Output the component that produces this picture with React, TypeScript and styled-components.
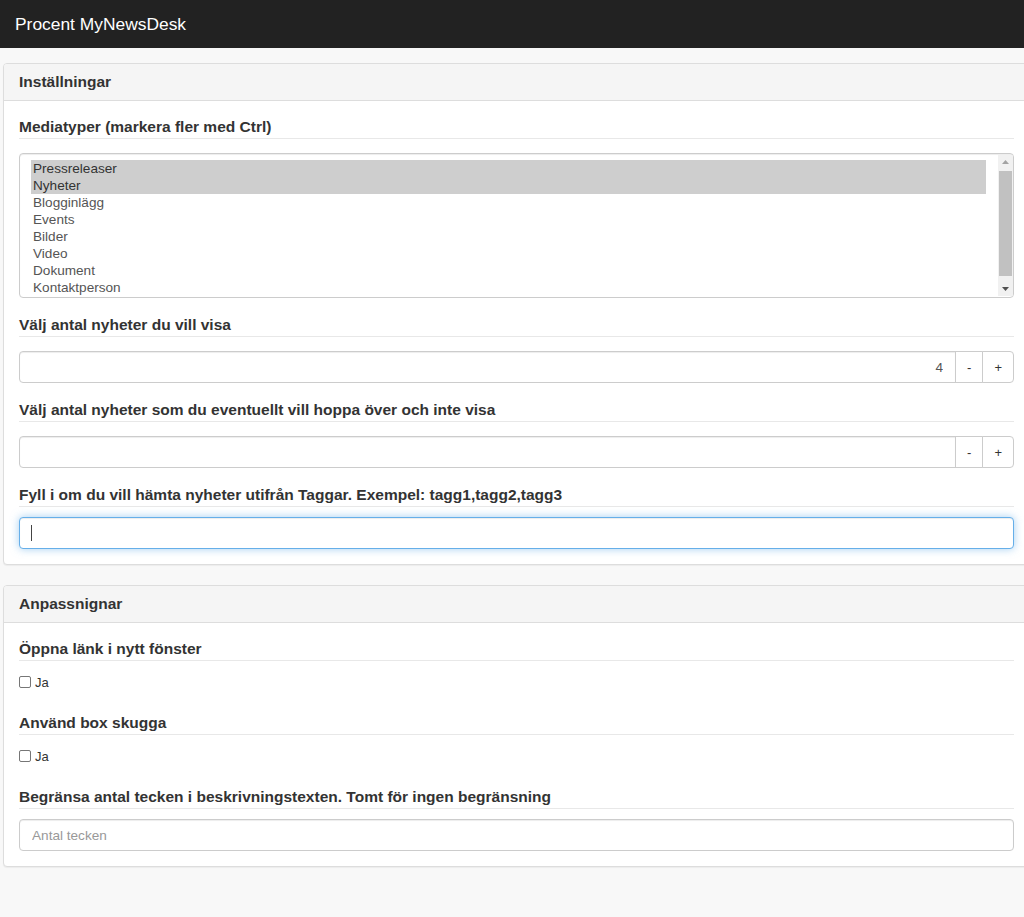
import React from "react";
import styled, { createGlobalStyle } from "styled-components";

const GlobalStyle = createGlobalStyle`
  html,
  body {
    margin: 0;
    padding: 0;
  }

  body {
    background: #f8f8f8;
    font-family: "Liberation Sans", Arial, Helvetica, sans-serif;
    color: #333;
    overflow-x: hidden;
  }

  * {
    box-sizing: border-box;
  }
`;

const Navbar = styled.header`
  height: 48px;
  background: #222;
  display: flex;
  align-items: center;
  padding: 0 15px;
`;

const Brand = styled.a`
  color: #fff;
  font-size: 17.4px;
  text-decoration: none;
`;

// panelen sticker ut lite till höger, som i originalet
const Main = styled.main`
  padding: 15px 0 0 3px;
  margin-right: -6px;
`;

const Panel = styled.section`
  background: #fff;
  border: 1px solid #ddd;
  border-radius: 4px;
  margin-bottom: 20px;
  box-shadow: 0 1px 1px rgba(0, 0, 0, 0.05);
`;

const PanelHeading = styled.h2`
  margin: 0;
  padding: 10px 15px;
  background: #f5f5f5;
  border-bottom: 1px solid #ddd;
  border-radius: 3px 3px 0 0;
  font-size: 15.5px;
  line-height: 16px;
  font-weight: bold;
  color: #333;
`;

const PanelBody = styled.div`
  padding: 15px;
`;

const FormGroup = styled.div<{ $spacing?: number }>`
  margin-bottom: ${({ $spacing }) => $spacing ?? 16}px;

  &:last-child {
    margin-bottom: 0;
  }
`;

const Legend = styled.div<{ $gap?: number }>`
  font-size: 15.5px;
  font-weight: bold;
  line-height: 21px;
  padding-bottom: 1px;
  border-bottom: 1px solid #e8e8e8;
  margin-bottom: ${({ $gap }) => $gap ?? 14}px;
  color: #333;
`;

const ListBox = styled.div`
  height: 145px;
  border: 1px solid #ccc;
  border-radius: 4px;
  display: flex;
  overflow: hidden;
  box-shadow: inset 0 1px 1px rgba(0, 0, 0, 0.075);
`;

const OptionList = styled.ul`
  flex: 1;
  list-style: none;
  margin: 0 12px 0 0;
  padding: 6px 0 0 11px;
`;

const OptionItem = styled.li<{ $selected?: boolean }>`
  font-size: 13.6px;
  line-height: 17px;
  padding: 0 2px;
  color: ${({ $selected }) => ($selected ? "#333" : "#555")};
  background: ${({ $selected }) => ($selected ? "#cecece" : "transparent")};
  white-space: nowrap;
`;

const Scrollbar = styled.div`
  width: 15px;
  margin: 1px 0;
  display: flex;
  flex-direction: column;
  background: #f1f1f1;
`;

const ScrollArrow = styled.div`
  height: 14px;
  display: flex;
  align-items: center;
  justify-content: center;
`;

const ScrollTrack = styled.div`
  flex: 1;
  padding: 2px 1px 6px;
  display: flex;
`;

const ScrollThumb = styled.div`
  flex: 1;
  background: #c1c1c1;
`;

const InputGroup = styled.div`
  display: flex;
  height: 32px;
`;

const NumberInput = styled.input`
  flex: 1;
  min-width: 0;
  height: 100%;
  border: 1px solid #ccc;
  border-radius: 4px 0 0 4px;
  padding: 0 12px;
  text-align: right;
  font-family: inherit;
  font-size: 13.6px;
  color: #555;
  background: #fff;
  box-shadow: inset 0 1px 1px rgba(0, 0, 0, 0.075);
  outline: none;
`;

const StepButton = styled.button`
  height: 100%;
  margin-left: -1px;
  padding: 0 11px;
  border: 1px solid #ccc;
  background: #fff;
  font-family: inherit;
  font-size: 13px;
  color: #333;
  cursor: pointer;

  &:last-child {
    border-radius: 0 4px 4px 0;
  }
`;

const InputWrap = styled.div`
  position: relative;
`;

const TextInput = styled.input<{ $focused?: boolean }>`
  display: block;
  width: 100%;
  height: 32px;
  border: 1px solid ${({ $focused }) => ($focused ? "#66afe9" : "#ccc")};
  border-radius: 4px;
  padding: 0 12px;
  font-family: inherit;
  font-size: 13.6px;
  color: #555;
  background: #fff;
  outline: none;
  box-shadow: ${({ $focused }) =>
    $focused
      ? "inset 0 1px 1px rgba(0,0,0,.075), 0 0 8px rgba(102,175,233,.6)"
      : "inset 0 1px 1px rgba(0,0,0,.075)"};

  &::placeholder {
    color: #999;
  }
`;

const Caret = styled.span`
  position: absolute;
  left: 12px;
  top: 8px;
  width: 1px;
  height: 16px;
  background: #444;
`;

const CheckRow = styled.label`
  display: flex;
  align-items: center;
  gap: 4px;
  height: 14px;
  font-size: 13px;
  color: #333;
  cursor: pointer;
`;

const CheckBox = styled.input`
  appearance: none;
  width: 12px;
  height: 12px;
  margin: 0;
  border: 1px solid #767676;
  border-radius: 2px;
  background: #fff;
`;

const Triangle: React.FC<{ up?: boolean; color: string }> = ({ up, color }) => (
  <svg width="7" height="4" viewBox="0 0 7 4">
    <path d={up ? "M0 4 L3.5 0 L7 4 Z" : "M0 0 L7 0 L3.5 4 Z"} fill={color} />
  </svg>
);

const mediaTypes = [
  "Pressreleaser",
  "Nyheter",
  "Blogginlägg",
  "Events",
  "Bilder",
  "Video",
  "Dokument",
  "Kontaktperson",
];

const selectedTypes = ["Pressreleaser", "Nyheter"];

const App: React.FC = () => {
  return (
    <>
      <GlobalStyle />
      <Navbar>
        <Brand href="#">Procent MyNewsDesk</Brand>
      </Navbar>

      <Main>
        <Panel>
          <PanelHeading>Inställningar</PanelHeading>
          <PanelBody>
            <FormGroup>
              <Legend>Mediatyper (markera fler med Ctrl)</Legend>
              <ListBox role="listbox" aria-multiselectable="true">
                <OptionList>
                  {mediaTypes.map((type) => (
                    <OptionItem
                      key={type}
                      role="option"
                      $selected={selectedTypes.includes(type)}
                    >
                      {type}
                    </OptionItem>
                  ))}
                </OptionList>
                <Scrollbar>
                  <ScrollArrow>
                    <Triangle up color="#a3a3a3" />
                  </ScrollArrow>
                  <ScrollTrack>
                    <ScrollThumb />
                  </ScrollTrack>
                  <ScrollArrow>
                    <Triangle color="#505050" />
                  </ScrollArrow>
                </Scrollbar>
              </ListBox>
            </FormGroup>

            <FormGroup>
              <Legend>Välj antal nyheter du vill visa</Legend>
              <InputGroup>
                <NumberInput type="text" defaultValue="4" />
                <StepButton>-</StepButton>
                <StepButton>+</StepButton>
              </InputGroup>
            </FormGroup>

            <FormGroup>
              <Legend>Välj antal nyheter som du eventuellt vill hoppa över och inte visa</Legend>
              <InputGroup>
                <NumberInput type="text" />
                <StepButton>-</StepButton>
                <StepButton>+</StepButton>
              </InputGroup>
            </FormGroup>

            <FormGroup>
              <Legend $gap={10}>
                Fyll i om du vill hämta nyheter utifrån Taggar. Exempel: tagg1,tagg2,tagg3
              </Legend>
              <InputWrap>
                <TextInput type="text" $focused />
                <Caret />
              </InputWrap>
            </FormGroup>
          </PanelBody>
        </Panel>

        <Panel>
          <PanelHeading>Anpassnignar</PanelHeading>
          <PanelBody>
            <FormGroup $spacing={23}>
              <Legend>Öppna länk i nytt fönster</Legend>
              <CheckRow>
                <CheckBox type="checkbox" />
                Ja
              </CheckRow>
            </FormGroup>

            <FormGroup $spacing={23}>
              <Legend>Använd box skugga</Legend>
              <CheckRow>
                <CheckBox type="checkbox" />
                Ja
              </CheckRow>
            </FormGroup>

            <FormGroup>
              <Legend $gap={10}>
                Begränsa antal tecken i beskrivningstexten. Tomt för ingen begränsning
              </Legend>
              <TextInput type="text" placeholder="Antal tecken" />
            </FormGroup>
          </PanelBody>
        </Panel>
      </Main>
    </>
  );
};

export default App;
